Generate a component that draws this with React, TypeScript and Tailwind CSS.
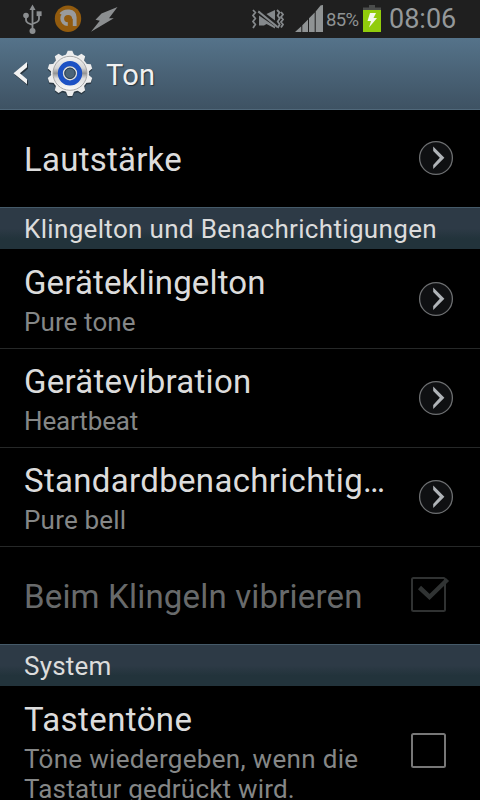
import type { ReactNode } from "react";

function ArrowCircle() {
  return (
    <svg className="mr-[26px] size-9 shrink-0" viewBox="0 0 36 36">
      <circle cx="18" cy="18" r="16.4" fill="#0f1012" stroke="#6d6f71" strokeWidth="1.3" />
      <path d="M15.2 6.6 L26.4 17.8 L15.2 29 V24.9 L21.8 17.8 L15.2 11Z" fill="#b0b4b8" />
    </svg>
  );
}

function CheckBox({ checked = false }: { checked?: boolean }) {
  return (
    <svg className="mr-[28px] h-10 w-[42px] shrink-0" viewBox="0 0 42 40">
      <rect x="2" y="3" width="33" height="33" rx="1.5" fill="none" stroke={checked ? "#303232" : "#777"} strokeWidth="2" />
      {checked && <path d="M9.5 12.5 L19.5 22 L37.5 4.5" fill="none" stroke="#303333" strokeWidth="4.5" />}
    </svg>
  );
}

function Row({ title, sub, spacing, subSpacing, height = "h-[99px]", children }: { title: string; sub: string; spacing: string; subSpacing: string; height?: string; children: ReactNode }) {
  return (
    <div className={`flex shrink-0 items-center border-b border-[#262828] ${height}`}>
      <div className="min-w-0 flex-1 pl-6 pt-[2px]">
        <div className={`h-[39px] whitespace-nowrap text-[33px] leading-[39px] text-[#dcdcdc] ${spacing}`}>{title}</div>
        <div className={`mt-[5px] text-[26px] leading-[30px] text-[#858787] ${subSpacing}`}>{sub}</div>
      </div>
      {children}
    </div>
  );
}

function Section({ label, spacing }: { label: string; spacing: string }) {
  return (
    <div className="h-[42px] shrink-0 border-t border-[#455a69] bg-linear-to-b from-[#2d3a46] from-50% to-[#22333b] to-75% pl-6">
      <div className={`whitespace-nowrap pt-[6px] text-[26px] leading-[30px] text-[#dcdcdc] ${spacing}`}>{label}</div>
    </div>
  );
}

function StatusBar() {
  return (
    <div className="flex h-[38px] shrink-0 items-center bg-[#1f1f1f]">
      <svg className="h-[38px] w-[130px]" viewBox="0 0 130 38">
        <g stroke="#8b8e90" fill="#8b8e90">
          <path d="M32.5 8 V31 M26 17 V20 Q26 22 28 23 L32.5 25 M39 14 V19 Q39 21 37 22 L32.5 24" fill="none" strokeWidth="1.8" />
          <path d="M32.5 4.5 L35.5 10 H29.5Z" stroke="none" />
          <circle cx="26" cy="15.5" r="2.8" stroke="none" />
          <rect x="36.6" y="11.3" width="5" height="4.8" stroke="none" />
          <circle cx="32.5" cy="31" r="3" stroke="none" />
        </g>
        <circle cx="68" cy="18.7" r="13.2" fill="#925b0e" />
        <path d="M61 14.4 C64.5 10 74.7 9.8 74.7 17.5 V26 M74 18.6 A5.9 5.5 0 1 0 67.8 24.2" fill="none" stroke="#999b9c" strokeWidth="3.8" />
        <path d="M117.5 7 L109 18.3 H113.8 L91 31.8 L99.8 20.8 L95.5 19.8 L101.5 13.5Z" fill="#8b8e90" />
      </svg>
      <svg className="ml-auto h-[38px] w-[73px]" viewBox="250 0 73 38">
        <path d="M253 10 l2.3 2.5 -2.3 3 2.3 3 -2.3 3 2.3 3 -2.3 3.5 M259.5 11 l-1 2 M277 10 l2.5 2.5 -1.8 3 2 3 -2 3 2 3 -2 3.5 M281 12 l2 2.5 -2 2.5 2 2.5 -2 2.5 2 2.5 -2 3" fill="none" stroke="#85898c" strokeWidth="1.8" />
        <path d="M259 15.5 L275 26.5 V28.5 L266.5 24 L264 25.5 H259Z M266.5 14 L275 10 V20.5Z" fill="#85898c" />
        <path d="M259 12 L277.5 27" stroke="#85898c" strokeWidth="2.2" />
        <path d="M295 32 L301.3 26.3 V32Z M302.3 32 V25.2 L308 19.5 V32Z M309 32 V18.3 L314.7 12.5 V32Z M315.7 32 V11.5 L320.5 5.5 Q321 5 323 5 V32Z" fill="#8f9394" />
      </svg>
      <span className="ml-[3px] w-[33px] whitespace-nowrap pt-[2px] text-[18.5px] leading-[30px] tracking-[-0.6px] text-[#8f9394]">85%</span>
      <svg className="ml-[4px] h-[38px] w-[18px]" viewBox="0 0 18 38">
        <path d="M6 5 H12 V7.5 H18 V11 H0 V7.5 H6Z" fill="#4b4d4c" />
        <rect y="10" width="18" height="22" fill="#91cc0b" />
        <path d="M7 13 H13 L10.5 18 H14 L6 27.5 L8 21 H4.5Z" fill="#f4f8ec" />
      </svg>
      <span className="ml-[8px] w-[91px] whitespace-nowrap text-[27px] leading-[34px] text-[#94989a]">08:06</span>
    </div>
  );
}

const teeth = Array.from({ length: 10 }, (_, i) => i * 36);

function Header() {
  return (
    <div className="flex h-[72px] shrink-0 items-center border-b border-[#50687a] bg-linear-to-b from-[#55738a] to-[#3e5263]">
      <svg className="h-[72px] w-[100px] shrink-0" viewBox="0 38 100 72">
        <defs>
          <linearGradient id="metal" x1="0" y1="0" x2="0" y2="1">
            <stop offset="0" stopColor="#f5f5f5" />
            <stop offset=".35" stopColor="#d4d4d4" />
            <stop offset=".5" stopColor="#929292" />
            <stop offset=".65" stopColor="#dedede" />
            <stop offset="1" stopColor="#fafafa" />
          </linearGradient>
        </defs>
        <path d="M27 62 L13.5 73.3 L27 84.3 V79.3 L19.7 73.3 L27 67.3Z" fill="#26333d" transform="translate(1 1.5)" />
        <path d="M27 62 L13.5 73.3 L27 84.3 V79.3 L19.9 73.3 L27 67.3Z" fill="#f2f2f2" />
        <g fill="#2b3944" transform="translate(0 1.5)">
          <circle cx="70" cy="73.3" r="19.2" />
          {teeth.map((a) => <path key={a} d="M65.5 56 L67.7 50.7 H72.3 L74.5 56Z" transform={`rotate(${a} 70 73.3)`} />)}
        </g>
        <g fill="#ededed">
          {teeth.map((a) => <path key={a} d="M65.5 56 L67.7 50.7 H72.3 L74.5 56Z" transform={`rotate(${a} 70 73.3)`} />)}
        </g>
        <circle cx="70" cy="73.3" r="19" fill="#eee" />
        <circle cx="70" cy="73.3" r="17" fill="url(#metal)" stroke="#a0a0a0" strokeWidth=".9" />
        <circle cx="70" cy="73.3" r="9.6" fill="#4b6478" stroke="#1c51c4" strokeWidth="5.2" />
        <circle cx="70" cy="73.3" r="6.4" fill="#4b6478" stroke="#dedede" strokeWidth="1.5" />
        <circle cx="70" cy="73.3" r="5.2" fill="none" stroke="#2c3f50" strokeWidth="1" />
      </svg>
      <span className="ml-[6px] pt-[2px] text-[29px] leading-[36px] tracking-[0.3px] text-[#f1f1f1] [text-shadow:1px_1px_1px_#26333d]">Ton</span>
    </div>
  );
}

export default function App() {
  return (
    <div className="flex h-[800px] w-[480px] flex-col overflow-hidden bg-black font-['Roboto',sans-serif]">
      <StatusBar />
      <Header />
      <div className="flex h-[97px] shrink-0 items-center">
        <div className="flex-1 whitespace-nowrap pl-6 pt-[2px] text-[33px] leading-[39px] tracking-[0.24px] text-[#dcdcdc]">Lautstärke</div>
        <div className="pb-[2px]"><ArrowCircle /></div>
      </div>
      <Section label="Klingelton und Benachrichtigungen" spacing="tracking-[0.33px]" />
      <Row title="Geräteklingelton" sub="Pure tone" spacing="tracking-[0.14px]" subSpacing="tracking-[0.1px]" height="h-[100px]"><ArrowCircle /></Row>
      <Row title="Gerätevibration" sub="Heartbeat" spacing="tracking-[0.27px]" subSpacing="tracking-[-0.15px]"><ArrowCircle /></Row>
      <Row title="Standardbenachrichtig…" sub="Pure bell" spacing="tracking-[0.32px]" subSpacing="tracking-[0.2px]"><ArrowCircle /></Row>
      <div className="flex h-[97px] shrink-0 items-center">
        <div className="flex-1 whitespace-nowrap pl-6 pt-[2px] text-[33px] leading-[39px] tracking-[0.18px] text-[#686a6b]">Beim Klingeln vibrieren</div>
        <div className="pb-[2px]"><CheckBox checked /></div>
      </div>
      <Section label="System" spacing="tracking-[0.2px]" />
      <div className="flex h-[114px] shrink-0 items-center">
        <div className="flex-1 pl-6 pt-[18px]">
          <div className="text-[33px] leading-[39px] tracking-[0.4px] text-[#dcdcdc]">Tastentöne</div>
          <div className="mt-[5px] whitespace-nowrap text-[26px] leading-[30px] text-[#858787]">
            <div className="tracking-[0.31px]">Töne wiedergeben, wenn die</div>
            <div className="tracking-[0.2px]">Tastatur gedrückt wird.</div>
          </div>
        </div>
        <div className="pt-[16px]"><CheckBox /></div>
      </div>
    </div>
  );
}
